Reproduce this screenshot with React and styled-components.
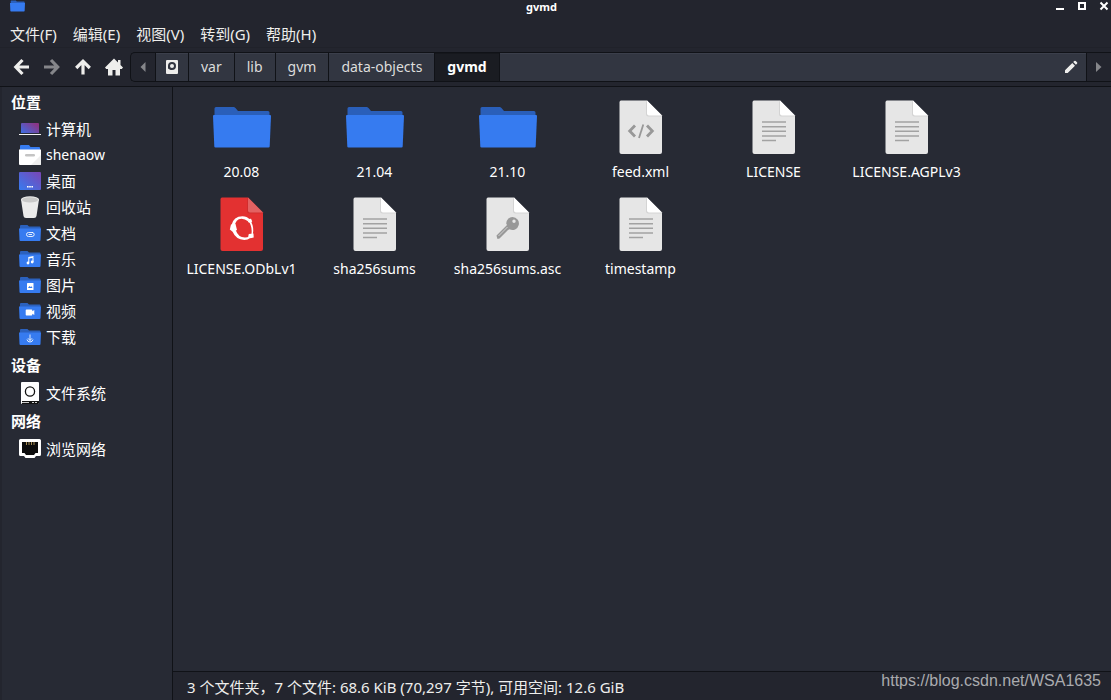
// src/App.jsx
import React, { useState } from 'react';
import styled, { createGlobalStyle } from 'styled-components';

const GlobalStyle = createGlobalStyle`
  * {
    box-sizing: border-box;
  }

  body {
    margin: 0;
    background: #23252e;
    color: #eeeeec;
    font-family: "Noto Sans", "Noto Sans CJK SC", sans-serif;
    font-size: 14px;
    line-height: 20px;
  }

  button {
    font: inherit;
    color: inherit;
    background: none;
    border: none;
    padding: 0;
    margin: 0;
  }

  svg {
    display: block;
    flex: none;
  }
`;

const Window = styled.div`
  display: flex;
  flex-direction: column;
  min-height: 100vh;
  background: #23252e;
`;

const TitleBar = styled.header`
  display: grid;
  grid-template-columns: 1fr auto 1fr;
  align-items: start;
  height: 20px;
  padding: 0 2px 0 10px;
`;

const Title = styled.h1`
  margin: 0;
  padding-right: 36px;
  font-size: 11px;
  line-height: 13px;
  font-weight: 700;
  color: #ffffff;
`;

const WindowButtons = styled.div`
  display: flex;
  justify-content: flex-end;
  gap: 12px;
  padding-top: 1px;
`;

const MenuBar = styled.nav`
  display: flex;
  gap: 16px;
  height: 28px;
  padding: 0 10px;
  border-bottom: 1px solid #20222a;
`;

const MenuButton = styled.button`
  font-size: 15px;
  line-height: 29px;
  white-space: nowrap;
`;

const Toolbar = styled.div`
  display: flex;
  align-items: center;
  height: 39px;
  padding-left: 11px;
  border-bottom: 1px solid #101217;
`;

const NavButtons = styled.div`
  display: flex;
  gap: 11px;
  margin-right: 6px;
`;

const NavButton = styled.button`
  color: ${({ $off }) => ($off ? '#85868a' : '#eeeeec')};
`;

const PathBar = styled.div`
  display: flex;
  flex: 1;
  height: 30px;
  border: 1px solid #101217;
  border-right: none;
  border-radius: 5px 0 0 5px;
  overflow: hidden;
`;

const PathArrow = styled.button`
  display: grid;
  place-items: center;
  width: 24px;
  color: #85868a;
`;

const Crumb = styled.button`
  display: flex;
  align-items: center;
  padding: 0 ${({ $icon }) => ($icon ? '10px' : '12px')};
  border-left: 1px solid #101217;
  background: ${({ $active }) => ($active ? '#1a1c22' : '#323641')};
  box-shadow: inset 0 1px ${({ $active }) => ($active ? '#15171c' : '#3b3f4b')};
  font-weight: ${({ $active }) => ($active ? 700 : 400)};
  color: ${({ $active }) => ($active ? '#ffffff' : '#dddddc')};
`;

const PathRest = styled.div`
  display: flex;
  flex: 1;
  align-items: center;
  justify-content: flex-end;
  padding-right: 8px;
  border-left: 1px solid #101217;
  border-right: 1px solid #101217;
  background: #323641;
  box-shadow: inset 0 1px #3b3f4b;
`;

const Main = styled.div`
  display: flex;
  flex: 1;
`;

const Sidebar = styled.aside`
  width: 173px;
  padding: 1px 0 0 9px;
  background: #272a34;
  border-left: 2px solid #23252e;
  border-right: 1px solid #101217;
`;

const SideHeading = styled.h2`
  margin: 0;
  font-size: 15px;
  line-height: 30px;
  font-weight: 700;
  color: #ffffff;

  &:first-child {
    line-height: 28px;
  }
`;

const SideList = styled.ul`
  list-style: none;
  margin: 0;
  padding: 0;
`;

const SideItem = styled.button`
  display: flex;
  align-items: center;
  gap: 5px;
  width: 100%;
  height: 26px;
  padding-left: 8px;
  text-align: left;
  color: #ffffff;
`;

const SideLabel = styled.span`
  font-size: ${({ $latin }) => ($latin ? '14px' : '15px')};
`;

const Content = styled.div`
  display: flex;
  flex: 1;
  flex-direction: column;
  min-width: 0;
`;

const FileGrid = styled.main`
  display: grid;
  flex: 1;
  grid-template-columns: repeat(auto-fill, 133px);
  grid-auto-rows: 97px;
  align-content: start;
  padding: 8px 16px 8px 2px;
  background: #272a34;
`;

const FileItem = styled.button`
  display: flex;
  flex-direction: column;
  align-items: center;
  gap: 3px;
  white-space: nowrap;
  color: #ffffff;
`;

const StatusBar = styled.footer`
  height: 29px;
  padding-left: 14px;
  border-top: 1px solid #101217;
  font-size: 15px;
  line-height: 30px;
  white-space: nowrap;
`;

const Watermark = styled.span`
  position: absolute;
  right: 10px;
  bottom: 9px;
  font-family: "Liberation Sans", Arial, sans-serif;
  font-size: 16px;
  color: #aaabae;
`;

const BackIcon = () => (
  <svg width="20" height="20" viewBox="0 0 20 20" fill="none" stroke="currentColor" strokeWidth="3.2">
    <path d="M18 10H5M11.500 3L4.800 10l6.700 7" />
  </svg>
);

const ForwardIcon = () => (
  <svg width="20" height="20" viewBox="0 0 20 20" fill="none" stroke="currentColor" strokeWidth="3.2">
    <path d="M2 10h13M9 3l6.700 7L9 17" />
  </svg>
);

const UpIcon = () => (
  <svg width="20" height="20" viewBox="0 0 20 20" fill="none" stroke="currentColor" strokeWidth="3.2">
    <path d="M10 17.500V4M3.200 11L10 4.200l6.800 6.800" />
  </svg>
);

const HomeIcon = () => (
  <svg width="20" height="20" viewBox="0 0 20 20" fill="currentColor">
    <path d="M10 1.500l4 4V3h2.500v5l2.500 2.600-1.200 1.400H16v6.500h-4.500V13h-3v5.500H4V12H2.200L1 10.600z" />
  </svg>
);

const DiskIcon = () => (
  <svg width="12" height="14" viewBox="0 0 12 14">
    <path fill="#eeeeec" fillRule="evenodd" d="M1 0h10q1 0 1 1v12q0 1-1 1H1q-1 0-1-1V1q0-1 1-1zM6 2a4 4 0 0 0-4 4v4h4a4 4 0 0 0 0-8z" />
    <path fill="#eeeeec" d="M2 8.500l2.500 1.500H2z" />
    <circle cx="6" cy="6" r="2" fill="#eeeeec" />
  </svg>
);

const TriangleIcon = ({ right }) => (
  <svg width="6" height="10" viewBox="0 0 6 10" fill="currentColor">
    <path d={right ? 'M0 0l5.500 5L0 10z' : 'M5.500 0L0.500 5l5 5z'} />
  </svg>
);

const PencilIcon = () => (
  <svg width="14" height="14" viewBox="0 0 14 14" fill="#eeeeec">
    <path d="M1 10.300L8.300 3l2.700 2.700L3.700 13H1zM9.200 2.100L10.300 1q.7-.7 1.400 0L13 2.300q.7.7 0 1.400l-1.100 1.100z" />
  </svg>
);

const SmallFolder = ({ width, height, children }) => (
  <svg width={width} height={height} viewBox="0 0 22 16">
    <path fill="#2b61be" d="M1 5V1q0-1 1-1h6.500L10 1.500h10.500q1 0 1 1V5z" />
    <path fill="#367bf0" d="M0 3.500h22l-.5 11.500q0 1-1 1h-19q-1 0-1-1z" />
    {children}
  </svg>
);

const ComputerIcon = () => (
  <svg width="22" height="22" viewBox="0 0 22 22">
    <defs>
      <linearGradient id="screen" x1="0" y1="1" x2="1" y2="0.300">
        <stop offset="0" stopColor="#3c6fe6" />
        <stop offset="1" stopColor="#8b3585" />
      </linearGradient>
    </defs>
    <path fill="url(#screen)" d="M3 5h16q1 0 1 1v9H2V6q0-1 1-1z" />
    <path fill="#f4f4f4" d="M0 16h22v1H0z" />
  </svg>
);

const UserFolderIcon = () => (
  <svg width="22" height="22" viewBox="0 0 22 22">
    <path fill="#367bf0" d="M1 7V2q0-1 1-1h8l1.500 2H20q1 0 1 1v3z" />
    <path fill="#ffffff" d="M0 5.500h22V20q0 1-1 1H1q-1 0-1-1z" />
    <path fill="#eeeeee" d="M22 11v9q0 1-1 1h-9z" />
    <rect x="6" y="10" width="10" height="2.500" rx="1.200" fill="#c4c4c4" />
  </svg>
);

const DesktopIcon = () => (
  <svg width="22" height="22" viewBox="0 0 22 22">
    <defs>
      <linearGradient id="desk" x1="0" y1="1" x2="1" y2="0">
        <stop offset="0" stopColor="#367bf0" />
        <stop offset="1" stopColor="#7b45b4" />
      </linearGradient>
    </defs>
    <rect y="2" width="22" height="18" rx="1" fill="url(#desk)" />
    <path fill="#ffffff" d="M8 16h1.600v1.600H8zM10.200 16h1.600v1.600h-1.600zM12.400 16H14v1.600h-1.600z" />
  </svg>
);

const TrashIcon = () => (
  <svg width="22" height="22" viewBox="0 0 22 22">
    <path fill="#ebebeb" d="M2 3.500L4.500 20q.3 2 2.500 2h8q2.200 0 2.500-2L20 3.500z" />
    <ellipse cx="11" cy="3.600" rx="9" ry="3.400" fill="#ebebeb" />
    <ellipse cx="11" cy="3.900" rx="8" ry="2.700" fill="#c9c9c9" />
  </svg>
);

const DriveIcon = () => (
  <svg width="22" height="22" viewBox="0 0 22 22">
    <rect x="2" y="0" width="18" height="22" rx="1" fill="#ffffff" />
    <path fill="#111111" d="M3 19h17v2q0 1-1 1H3z" />
    <path fill="#cccccc" d="M3 20h7v1H3zM13 20h2v1h-2zM16 20h2v1h-2z" />
    <circle cx="11" cy="9.500" r="4.600" fill="none" stroke="#111111" strokeWidth="1.300" />
  </svg>
);

const NetworkIcon = () => (
  <svg width="22" height="22" viewBox="0 0 22 22">
    <path fill="#ffffff" d="M1.500 1h19Q22 1 22 2.500v14q0 1.500-1.500 1.500H17l-1.500 2h-9L5 18H1.500Q0 18 0 16.500v-14Q0 1 1.500 1z" />
    <path fill="#0c0c0c" d="M3 4h16v11h-2.500L15 17H7l-1.500-2H3z" />
    <path stroke="#a58a50" d="M7.500 4v3M10 4v3M12.500 4v3M15 4v3" />
  </svg>
);

// glyphs printed on the small folders
const folderGlyphs = {
  clip: (
    <path fill="none" stroke="#ffffff" strokeWidth="1" opacity="0.850" d="M14 7.500H9.500a2 2 0 0 0 0 4H13a2.200 2 0 0 0 0-4M13 9.500H9.500" />
  ),
  music: (
    <g fill="#ffffff">
      <path d="M9.300 6l5.200-1v1.800l-4.200.8v4h-1zM13.500 6h1v5h-1z" />
      <circle cx="9" cy="12" r="1.400" />
      <circle cx="13.200" cy="11" r="1.400" />
    </g>
  ),
  image: (
    <g>
      <rect x="8" y="6" width="6.500" height="7" rx="0.500" fill="#ffffff" />
      <path fill="#367bf0" d="M9 11l1.500-2 1 1 1-.8 1 1.800z" />
    </g>
  ),
  video: <path fill="#ffffff" d="M7.500 6.500h5q.8 0 .8.800v1l2-1.300v5l-2-1.300v1q0 .8-.8.800h-5q-.8 0-.8-.8V7.300q0-.8.800-.8z" />,
  download: <path fill="none" stroke="#ffffff" opacity="0.850" d="M11 5.500v6M9 9.300l2 2.200 2-2.200M8 10.500q.5 2.500 3 2.500t3-2.500" />,
};

const FolderGlyphIcon = ({ glyph }) => (
  <SmallFolder width={22} height={16}>{folderGlyphs[glyph]}</SmallFolder>
);

const BigFolderIcon = () => (
  <svg width="64" height="64" viewBox="0 0 64 64">
    <path fill="#2a5fba" d="M4.500 21v-7.500q0-1.500 1.500-1.500h17.500q1 0 2 1l2.500 3H58q1.500 0 1.500 1.500V21z" />
    <path fill="#367bf0" d="M4 20h56q1 0 1 1l-1.300 30.500q-.1 1-1.200 1h-53q-1.100 0-1.200-1L3 21q0-1 1-1z" />
  </svg>
);

// shared page outline, the mark inside comes from children
const PageIcon = ({ fill = '#e6e6e6', fold = '#ffffff', children }) => (
  <svg width="64" height="64" viewBox="0 0 64 64">
    <path fill={fill} d="M12 5.500h26L53 20.500V57q0 2-2 2H12.500q-2 0-2-2V7.500q0-2 1.500-2z" />
    <path fill="#000000" opacity="0.080" d="M37 6v13q0 2.500 2.500 2.500H53v-1.500z" />
    <path fill={fold} d="M38 5.500L53 20.500H40q-2 0-2-2z" />
    {children}
  </svg>
);

const TextMark = () => (
  <path stroke="#a2a2a2" strokeWidth="1.400" d="M20 27h24M20 31.700h24M20 36.300h24M20 41h24M20 45.500h14" />
);

const XmlMark = () => (
  <g fill="none" stroke="#989898">
    <path d="M26 30.500L20.700 36l5.300 5.500M38 30.500l5.300 5.500-5.300 5.500" strokeWidth="2.800" />
    <path d="M34.300 29.500l-4.300 13.500" strokeWidth="1.800" />
  </g>
);

const KeyMark = () => (
  <g>
    <path fill="#989898" fillRule="evenodd" d="M36.500 25a6.500 6.500 0 1 1-3 12.300l-1.500.7-8.500 8.500-2 .5-.5-1.500-.5-2L31 33l-.8-1.500A6.500 6.500 0 0 1 36.500 25zM38 27.500a1.700 1.700 0 1 0 0 3.400 1.700 1.700 0 0 0 0-3.400z" />
    <path stroke="#dddddd" strokeWidth="0.800" d="M22.500 44l9-9" />
  </g>
);

const RingMark = () => (
  <g fill="#ffffff">
    <path d="M21.500 33q2-8.800 11-8.800 4.500 0 7 3l-1.500 2q-3-2.500-6.500-2.500-6 .3-6.700 7.300z" />
    <path d="M22.500 39.500l3.200-1.500q2.300 7.300 9.300 7.500 2.500 0 4.500-1.500l.8 2q-2.500 2-6 2-8.500-.5-11.800-8.500z" />
    <path d="M39.500 30.500l1.500-1q3.300 6 1.800 13l-1.300-.3q.8-6.500-2-11.700z" />
    <path d="M21 32.500l4.500-.5 1.500 6-4 2-3.200-2.500z" />
    <path d="M38.500 27l2.500-.3 1.200 2.500-1.500 2-2.800-1.200z" />
    <path d="M38.800 42l4.700-.5.2 4-3.200.8-2.300-1.800z" />
  </g>
);

const fileIcons = {
  folder: <BigFolderIcon />,
  text: <PageIcon><TextMark /></PageIcon>,
  xml: <PageIcon><XmlMark /></PageIcon>,
  key: <PageIcon><KeyMark /></PageIcon>,
  odb: <PageIcon fill="#e33131" fold="#e36262"><RingMark /></PageIcon>,
};

const menus = ['文件(F)', '编辑(E)', '视图(V)', '转到(G)', '帮助(H)'];

const crumbs = ['var', 'lib', 'gvm', 'data-objects', 'gvmd'];

const places = [
  {
    heading: '位置',
    items: [
      { label: '计算机', icon: <ComputerIcon /> },
      { label: 'shenaow', icon: <UserFolderIcon />, latin: true },
      { label: '桌面', icon: <DesktopIcon /> },
      { label: '回收站', icon: <TrashIcon /> },
      { label: '文档', icon: <FolderGlyphIcon glyph="clip" /> },
      { label: '音乐', icon: <FolderGlyphIcon glyph="music" /> },
      { label: '图片', icon: <FolderGlyphIcon glyph="image" /> },
      { label: '视频', icon: <FolderGlyphIcon glyph="video" /> },
      { label: '下载', icon: <FolderGlyphIcon glyph="download" /> },
    ],
  },
  { heading: '设备', items: [{ label: '文件系统', icon: <DriveIcon /> }] },
  { heading: '网络', items: [{ label: '浏览网络', icon: <NetworkIcon /> }] },
];

const files = [
  { name: '20.08', type: 'folder' },
  { name: '21.04', type: 'folder' },
  { name: '21.10', type: 'folder' },
  { name: 'feed.xml', type: 'xml' },
  { name: 'LICENSE', type: 'text' },
  { name: 'LICENSE.AGPLv3', type: 'text' },
  { name: 'LICENSE.ODbLv1', type: 'odb' },
  { name: 'sha256sums', type: 'text' },
  { name: 'sha256sums.asc', type: 'key' },
  { name: 'timestamp', type: 'text' },
];

const App = () => {
  const [current, setCurrent] = useState('gvmd');

  return (
    <Window>
      <GlobalStyle />
      <TitleBar>
        <SmallFolder width={15} height={12} />
        <Title>gvmd</Title>
        <WindowButtons>
          <button aria-label="Minimize">
            <svg width="10" height="10" viewBox="0 0 10 10"><path fill="#fff" d="M1 7h8v2H1z" /></svg>
          </button>
          <button aria-label="Maximize">
            <svg width="10" height="10" viewBox="0 0 10 10"><path fill="none" stroke="#fff" strokeWidth="2" d="M2 2h6v6H2z" /></svg>
          </button>
          <button aria-label="Close">
            <svg width="10" height="10" viewBox="0 0 10 10"><path stroke="#fff" strokeWidth="2" d="M1.500 1.500l7 7M8.500 1.500l-7 7" /></svg>
          </button>
        </WindowButtons>
      </TitleBar>
      <MenuBar>
        {menus.map((menu) => (
          <MenuButton key={menu}>{menu}</MenuButton>
        ))}
      </MenuBar>
      <Toolbar>
        <NavButtons>
          <NavButton aria-label="Back"><BackIcon /></NavButton>
          <NavButton aria-label="Forward" $off><ForwardIcon /></NavButton>
          <NavButton aria-label="Up"><UpIcon /></NavButton>
          <NavButton aria-label="Home"><HomeIcon /></NavButton>
        </NavButtons>
        <PathBar>
          <PathArrow aria-label="Scroll left"><TriangleIcon /></PathArrow>
          <Crumb aria-label="File system" $icon><DiskIcon /></Crumb>
          {crumbs.map((crumb) => (
            <Crumb key={crumb} $active={crumb === current} onClick={() => setCurrent(crumb)}>
              {crumb}
            </Crumb>
          ))}
          <PathRest>
            <button aria-label="Edit path"><PencilIcon /></button>
          </PathRest>
          <PathArrow aria-label="Scroll right"><TriangleIcon right /></PathArrow>
        </PathBar>
      </Toolbar>
      <Main>
        <Sidebar>
          {places.map((group) => (
            <React.Fragment key={group.heading}>
              <SideHeading>{group.heading}</SideHeading>
              <SideList>
                {group.items.map((item) => (
                  <li key={item.label}>
                    <SideItem>
                      {item.icon}
                      <SideLabel $latin={item.latin}>{item.label}</SideLabel>
                    </SideItem>
                  </li>
                ))}
              </SideList>
            </React.Fragment>
          ))}
        </Sidebar>
        <Content>
          <FileGrid>
            {files.map((file) => (
              <FileItem key={file.name}>
                {fileIcons[file.type]}
                {file.name}
              </FileItem>
            ))}
          </FileGrid>
          <StatusBar>3 个文件夹，7 个文件: 68.6 KiB (70,297 字节), 可用空间: 12.6 GiB</StatusBar>
        </Content>
      </Main>
      <Watermark>https://blog.csdn.net/WSA1635</Watermark>
    </Window>
  );
};

export default App;
